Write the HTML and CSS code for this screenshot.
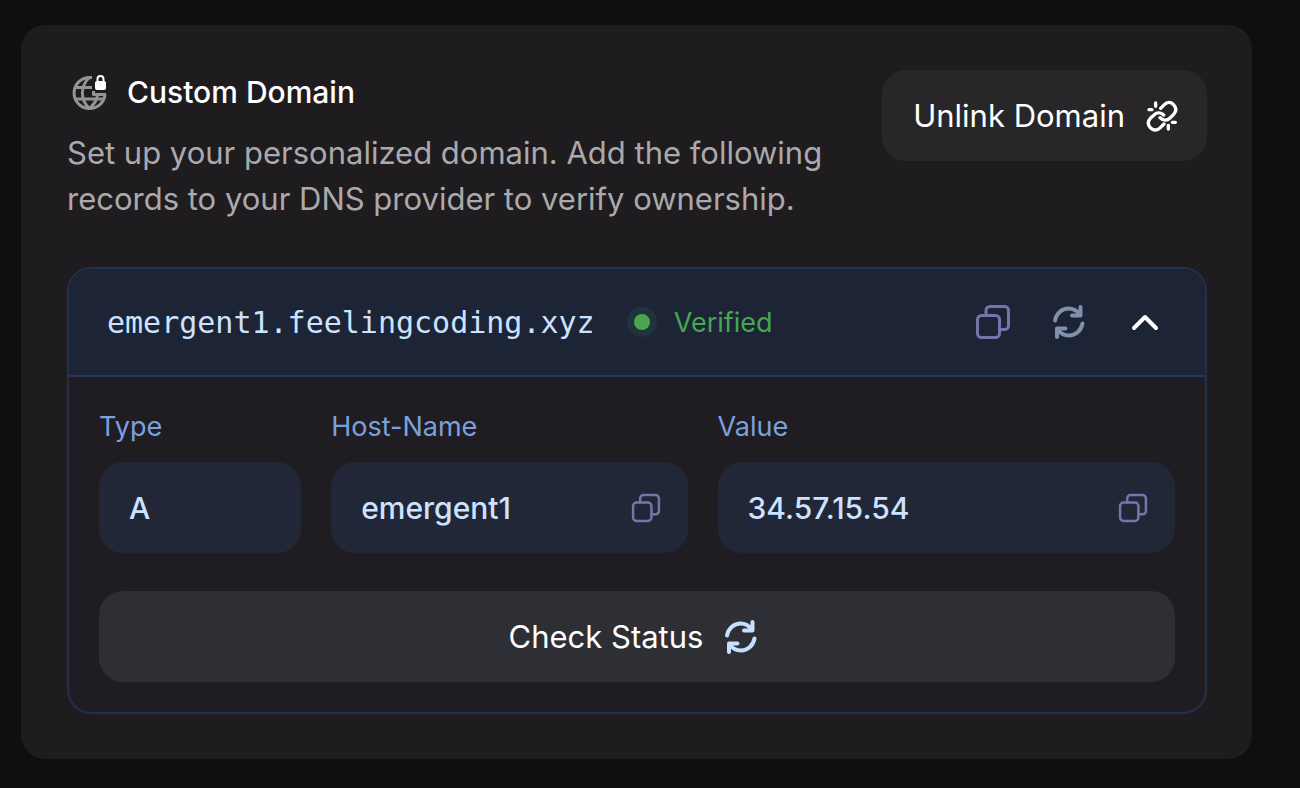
FILE: index.html
```html
<!DOCTYPE html>
<html lang="en">
<head>
<meta charset="utf-8">
<meta name="viewport" content="width=device-width, initial-scale=1">
<title>Custom Domain</title>
<link rel="stylesheet" href="styles.css">
</head>
<body>
<svg class="sprite" aria-hidden="true">
  <symbol id="copy" viewBox="0 0 36 36">
    <rect x="2.500" y="11.500" width="22" height="22" rx="4"/>
    <path d="M11 11V6.500a4 4 0 0 1 4-4h14.500a4 4 0 0 1 4 4v15a4 4 0 0 1-4 4h-4.500"/>
  </symbol>
  <symbol id="refresh" viewBox="0 0 36 36">
    <path d="M4 16.500C5.500 9 11 4.500 17.500 4.500c4.500 0 8.500 2 11 6M29.500 3v8.500h-8.500M31.500 19.500c-1.500 7.500-7 12-13.500 12-4.500 0-8.500-2-11-6M6 33v-8.500h8.500"/>
  </symbol>
</svg>
<main class="card">
  <header class="intro">
    <div class="intro-text">
      <h1 class="title">
        <svg class="icon globe" viewBox="0 0 40 40" aria-hidden="true">
          <path class="globe-lines" d="M23 5.500H20.500a15.500 15.500 0 1 0 15.500 17M20.500 5.500C11 14 11 28 20.500 36.500M20.500 36.500C25.500 32 28 28 28.500 23M6 15.500h17M6 27h28M24.500 19v3.500H37"/>
          <rect class="lock-body" x="26" y="9" width="11" height="9" rx="2"/>
          <path class="lock-bow" d="M28.500 10V7a3 3 0 0 1 6 0v3"/>
        </svg>
        Custom Domain
      </h1>
      <p class="description">Set up your personalized domain. Add the following records to your DNS provider to verify ownership.</p>
    </div>
    <button class="button unlink" type="button">
      Unlink Domain
      <svg class="icon unlink-icon" viewBox="0 0 102 102" aria-hidden="true">
        <path d="M47 28L58 17C66 9 76 7 85 16 95 26 94 37 86 46L75 57C66 66 53 65 45 56M57 75L46 86C37 95 26 95 17 87 8 78 8 67 16 58L28 47C36 39 48 40 56 48M32 12V22M12 32H21M70 79V90M82 70H91"/>
      </svg>
    </button>
  </header>
  <section class="panel">
    <div class="panel-head">
      <h2 class="domain">emergent1.feelingcoding.xyz</h2>
      <span class="status"><span class="dot"></span>Verified</span>
      <div class="actions">
        <button class="icon-button copy" type="button" aria-label="Copy domain"><svg class="icon"><use href="#copy"/></svg></button>
        <button class="icon-button refresh" type="button" aria-label="Refresh"><svg class="icon"><use href="#refresh"/></svg></button>
        <button class="icon-button toggle" type="button" aria-label="Collapse" aria-expanded="true"><svg class="icon" viewBox="0 0 36 36"><path d="M7 24l11-11 11 11"/></svg></button>
      </div>
    </div>
    <div class="panel-body">
      <div class="records">
        <div class="record">
          <label class="label" for="type">Type</label>
          <div class="field"><input class="value" id="type" value="A" readonly></div>
        </div>
        <div class="record">
          <label class="label" for="host">Host-Name</label>
          <div class="field"><input class="value" id="host" value="emergent1" readonly><button class="icon-button copy small" type="button" aria-label="Copy host name"><svg class="icon"><use href="#copy"/></svg></button></div>
        </div>
        <div class="record">
          <label class="label" for="value">Value</label>
          <div class="field"><input class="value" id="value" value="34.57.15.54" readonly><button class="icon-button copy small" type="button" aria-label="Copy value"><svg class="icon"><use href="#copy"/></svg></button></div>
        </div>
      </div>
      <button class="button check" type="button">Check Status <svg class="icon"><use href="#refresh"/></svg></button>
    </div>
  </section>
</main>
</body>
</html>
```
FILE: styles.css
```css
* { box-sizing: border-box; }

body {
  margin: 0;
  padding: 25px 48px 28px 21px;
  background: #100e11;
  color: #fff;
  font-family: Inter, "Liberation Sans", sans-serif;
  font-size: 30px;
}

button, input { font: inherit; }
h1, h2, p { margin: 0; }

.sprite { position: absolute; width: 0; height: 0; }

.icon {
  display: block;
  flex: none;
  width: 36px;
  height: 36px;
  fill: none;
  stroke: currentColor;
  stroke-width: 4;
  stroke-linecap: round;
  stroke-linejoin: round;
}

.card {
  padding: 45px 45px 45px 46px;
  border-radius: 24px;
  background: #1e1c1f;
}

.intro {
  display: flex;
  align-items: flex-start;
  justify-content: space-between;
  gap: 32px;
}

.intro-text { max-width: 784px; }

.title {
  display: flex;
  align-items: center;
  gap: 18px;
  height: 44px;
  padding-left: 2px;
  font-size: 30px;
  font-weight: 500;
}

.globe { width: 40px; height: 40px; }
.globe-lines { stroke: #959395; stroke-width: 3; stroke-linecap: butt; }
.lock-body { fill: #fff; stroke: none; }
.lock-bow { stroke: #fff; stroke-width: 2; }

.description {
  padding-top: 16px;
  color: #aba9ab;
  font-size: 31px;
  line-height: 46px;
}

.button {
  display: flex;
  align-items: center;
  justify-content: center;
  gap: 20px;
  height: 91px;
  padding: 0 28px 0 31px;
  border: 0;
  border-radius: 24px;
  color: #fff;
  font-size: 31px;
  white-space: nowrap;
}

.unlink { flex: none; background: #282629; }
.unlink-icon { width: 34px; height: 34px; stroke-width: 10; }

.panel {
  margin-top: 45px;
  border: 2px solid #22314b;
  border-radius: 24px;
  background: #1f1d22;
  overflow: hidden;
}

.panel-head {
  display: flex;
  align-items: center;
  height: 108px;
  padding: 0 42px 0 38px;
  border-bottom: 2px solid #23385a;
  background: #1c2436;
}

.domain {
  color: #cce2ff;
  font-family: "DejaVu Sans Mono", monospace;
  font-size: 30px;
  font-weight: 400;
}

.status {
  display: flex;
  align-items: center;
  gap: 17px;
  margin-left: 32px;
  color: #47a650;
  font-size: 27px;
}

.dot {
  width: 30px;
  height: 30px;
  border: 7px solid #20353a;
  border-radius: 50%;
  background: #4aa651;
}

.actions { display: flex; gap: 40px; margin-left: auto; }

.icon-button { padding: 0; border: 0; background: none; }
.icon-button .icon { stroke-width: 4; }
.copy { color: #7774ac; }
.copy .icon { stroke-width: 3; }
.refresh { color: #7e90aa; }
.toggle { color: #fff; }
.small .icon { width: 30px; height: 30px; }

.panel-body { padding: 30px; }

.records {
  display: grid;
  grid-template-columns: 202fr 356fr 457fr;
  gap: 30px;
}

.record { min-width: 0; }

.label {
  display: block;
  padding-bottom: 15px;
  color: #7ba0df;
  font-size: 27px;
  line-height: 40px;
}

.field {
  display: flex;
  align-items: center;
  height: 91px;
  padding: 0 27px 0 30px;
  border-radius: 24px;
  background: #222737;
}

.value {
  flex: 1;
  min-width: 0;
  width: 0;
  padding: 0;
  border: 0;
  outline: 0;
  background: none;
  color: #cce2ff;
  font-weight: 500;
}

.check {
  width: 100%;
  margin-top: 38px;
  padding: 0 36px 0 30px;
  background: #2e2f34;
}

.check .icon { color: #c7dfff; }
```
